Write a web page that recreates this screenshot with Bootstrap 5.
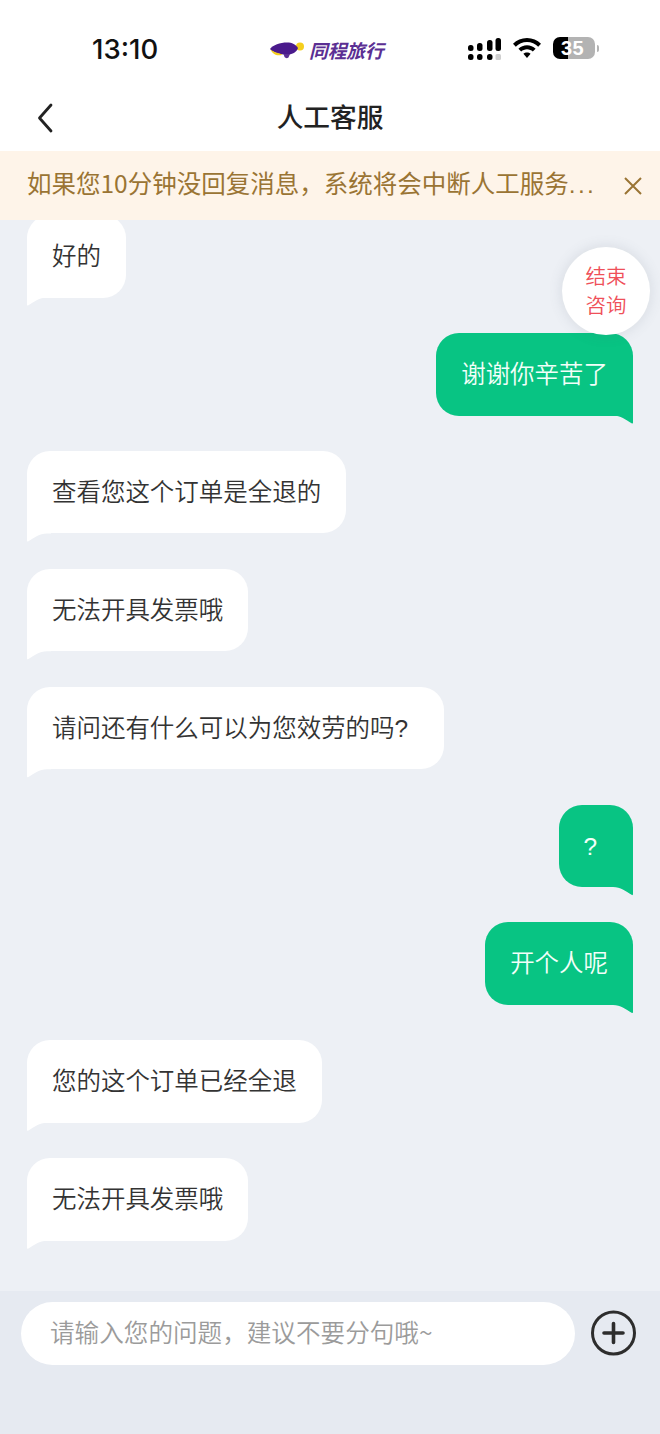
<!DOCTYPE html>
<html lang="zh-CN">
<head>
    <meta charset="UTF-8">
    <meta name="viewport" content="width=device-width, initial-scale=1.0">
    <title>人工客服</title>
    <link href="https://cdn.jsdelivr.net/npm/bootstrap@5.3.2/dist/css/bootstrap.min.css" rel="stylesheet">
    <style>
        html, body { height: 1434px; overflow: hidden; }
        body { font-family: "Noto Sans CJK SC", "Noto Sans", sans-serif; background: #edf0f5; color: #333; }

        /* status bar */
        .status-bar { height: 88px; padding: 10px 0 0 92px; background: #fff; }
        .status-time { width: 178px; margin-top: 1px; font: 500 27.5px/1 Inter, "Liberation Sans", sans-serif; color: #111; }
        .status-brand { width: 198px; margin-top: 3px; gap: 5px; font-size: 18.7px; font-weight: 700; font-style: italic; color: #5b2f93; line-height: 1; }
        .status-icons { gap: 12px; margin-bottom: 2px; }
        .battery-box { width: 42px; height: 22px; border-radius: 7px; background: linear-gradient(90deg, #000 15px, #b3b3b3 15px); color: #fff; font: 700 20px/22px "Liberation Sans", sans-serif; letter-spacing: .5px; padding-left: 8px; }
        .battery-wrap { gap: 2px; }
        .battery-nub { width: 2px; height: 7px; border-radius: 0 2px 2px 0; background: #b3b3b3; }

        /* title bar */
        .title-bar { height: 63px; background: #fff; padding-bottom: 6px; }
        .title-text { font-size: 26.7px; font-weight: 500; color: #222; line-height: 1; }
        .back-btn { left: 37px; top: 15px; }

        /* notice */
        .notice-bar { height: 69px; background: #fef4e9; color: #9a7434; font-size: 24.5px; padding: 0 18px 4px 27px; }
        .notice-text { line-height: 1.2; white-space: nowrap; }
        .notice-dots { font-family: "Liberation Sans", sans-serif; letter-spacing: 2.4px; }
        .notice-close { margin-top: 4px; }

        /* messages */
        .chat-area { height: 1071px; overflow: hidden; padding: 0 27px; }
        .msg-row { margin-bottom: 35.4px; }
        .msg-row:first-child { margin-top: -5px; margin-bottom: 35.5px; }
        .bubble { position: relative; height: 82.5px; padding: 0 25px; border-radius: 23px; font-size: 24.47px; font-weight: 350; line-height: 80px; white-space: nowrap; }
        .bubble::after { content: ""; position: absolute; bottom: -9px; width: 24px; height: 30px; background: inherit; }
        .bubble-in { background: #fff; border-bottom-left-radius: 0; }
        .bubble-in::after { left: 0; clip-path: path("M0 0H24V21H20C12 21 8 25 1 29C.4 29.300 0 29 0 28Z"); }
        .bubble-out { background: #08c483; color: #f2fff9; border-bottom-right-radius: 0; }
        .bubble-out::after { right: 0; clip-path: path("M24 0H0V21H4C12 21 16 25 23 29C23.600 29.300 24 29 24 28Z"); }
        .q-mark { display: inline-block; width: 24.47px; font-family: "Liberation Sans", sans-serif; }

        .end-btn { right: 10px; top: 247px; width: 88px; height: 88px; padding-bottom: 2px; background: #fff; color: #ef5059; font-size: 20.5px; font-weight: 350; line-height: 29px; box-shadow: 0 0 14px rgba(90, 100, 120, .16); z-index: 5; }

        /* input bar */
        .input-bar { height: 143px; background: #e6eaf1; padding: 11px 24px 0 21px; gap: 16px; }
        .msg-input.form-control { height: 63px; border: 0; padding: 0 29px 5px 29px; font-size: 24.6px; font-weight: 350; box-shadow: none; }
        .msg-input.form-control::placeholder { color: #9b9b9b; opacity: 1; }
        .plus-btn { margin-top: 8px; }
    </style>
</head>
<body class="position-relative d-flex flex-column">
    <!-- Status bar -->
    <div class="status-bar d-flex align-items-center flex-shrink-0">
        <div class="status-time">13:10</div>
        <div class="status-brand d-flex align-items-center">
            <svg width="34" height="17" viewBox="0 0 34 17">
                <circle cx="30" cy="4.500" r="4" fill="#f5cf1d"/>
                <path d="M0 7C3 3 10 .5 17 .5C22 .5 26 2.500 28 6C27 9.500 23 12 19 12.500C12 13 4 11.500 0 7Z" fill="#4a1a8c"/>
                <path d="M.5 7.500C3 9.500 7 11 12.500 12.500C11 13.500 8 13.500 6 13C3.500 12 1.500 10 .5 7.500Z" fill="#f5cf1d"/>
                <path d="M13.500 12H20L18.500 15.500C17 16.500 15.500 16.300 14.500 15Z" fill="#5b2f93"/>
            </svg>
            <span>同程旅行</span>
        </div>
        <div class="status-icons d-flex align-items-center">
            <svg width="33" height="23" viewBox="0 0 33 23">
                <g fill="#000">
                    <rect x="0" y="8" width="5.500" height="6" rx="2.500"/>
                    <rect x="9" y="6" width="5.500" height="8" rx="2.500"/>
                    <rect x="19" y="3" width="5.500" height="11" rx="2.500"/>
                    <rect x="27.500" y="1" width="5.500" height="13" rx="2.500"/>
                    <rect x="0" y="17" width="5.500" height="6" rx="2.500"/>
                    <rect x="9" y="17" width="5.500" height="6" rx="2.500"/>
                    <rect x="19" y="17" width="5.500" height="6" rx="2.500"/>
                </g>
                <rect x="27.500" y="17" width="5.500" height="6" rx="1.500" fill="#cfcfcf"/>
            </svg>
            <svg width="28" height="20" viewBox="0 0 28 20">
                <path d="M14 0C19.500 0 24.300 2.200 28 5.800L25.200 8.700C22.300 5.900 18.400 4.100 14 4.100C9.600 4.100 5.700 5.900 2.800 8.700L0 5.800C3.700 2.200 8.500 0 14 0Z" fill="#000"/>
                <path d="M14 7.200C17.300 7.200 20.300 8.500 22.600 10.700L19.800 13.600C18.300 12.200 16.300 11.300 14 11.300C11.700 11.300 9.700 12.200 8.200 13.600L5.400 10.700C7.700 8.500 10.700 7.200 14 7.200Z" fill="#000"/>
                <path d="M14 14.400C15.400 14.400 16.600 14.900 17.600 15.800L14 20L10.400 15.800C11.400 14.900 12.600 14.400 14 14.400Z" fill="#000"/>
            </svg>
            <div class="battery-wrap d-flex align-items-center">
                <div class="battery-box">35</div>
                <div class="battery-nub"></div>
            </div>
        </div>
    </div>

    <!-- Title bar -->
    <div class="title-bar position-relative d-flex align-items-center justify-content-center flex-shrink-0">
        <svg class="back-btn position-absolute" width="16" height="30" viewBox="0 0 16 30">
            <path d="M14 2L2.500 15L14 28" fill="none" stroke="#222" stroke-width="2.800" stroke-linecap="round" stroke-linejoin="round"/>
        </svg>
        <div class="title-text">人工客服</div>
    </div>

    <!-- Notice -->
    <div class="notice-bar d-flex align-items-center justify-content-between flex-shrink-0">
        <div class="notice-text">如果您10分钟没回复消息，系统将会中断人工服务<span class="notice-dots">...</span></div>
        <svg class="notice-close" width="18" height="18" viewBox="0 0 18 18">
            <path d="M1 1L17 17M17 1L1 17" stroke="#9a7434" stroke-width="2" fill="none"/>
        </svg>
    </div>

    <!-- Messages -->
    <div class="chat-area flex-shrink-0">
        <div class="msg-row d-flex"><div class="bubble bubble-in">好的</div></div>
        <div class="msg-row d-flex justify-content-end"><div class="bubble bubble-out">谢谢你辛苦了</div></div>
        <div class="msg-row d-flex"><div class="bubble bubble-in">查看您这个订单是全退的</div></div>
        <div class="msg-row d-flex"><div class="bubble bubble-in">无法开具发票哦</div></div>
        <div class="msg-row d-flex"><div class="bubble bubble-in">请问还有什么可以为您效劳的吗<span class="q-mark">?</span></div></div>
        <div class="msg-row d-flex justify-content-end"><div class="bubble bubble-out"><span class="q-mark">?</span></div></div>
        <div class="msg-row d-flex justify-content-end"><div class="bubble bubble-out">开个人呢</div></div>
        <div class="msg-row d-flex"><div class="bubble bubble-in">您的这个订单已经全退</div></div>
        <div class="msg-row d-flex"><div class="bubble bubble-in">无法开具发票哦</div></div>
    </div>

    <!-- Floating end button -->
    <div class="end-btn position-absolute rounded-circle d-flex align-items-center justify-content-center text-center">结束<br>咨询</div>

    <!-- Input bar -->
    <div class="input-bar d-flex align-items-start flex-grow-1">
        <input class="msg-input form-control rounded-pill flex-grow-1" type="text" placeholder="请输入您的问题，建议不要分句哦~">
        <svg class="plus-btn flex-shrink-0" width="45" height="46" viewBox="0 0 45 46">
            <circle cx="22.500" cy="23" r="21" fill="none" stroke="#2d2d2d" stroke-width="3"/>
            <path d="M22.500 13.500V32.500M13 23H32" stroke="#2d2d2d" stroke-width="3.600" stroke-linecap="round"/>
        </svg>
    </div>

    <script src="https://cdn.jsdelivr.net/npm/bootstrap@5.3.2/dist/js/bootstrap.bundle.min.js"></script>
</body>
</html>
